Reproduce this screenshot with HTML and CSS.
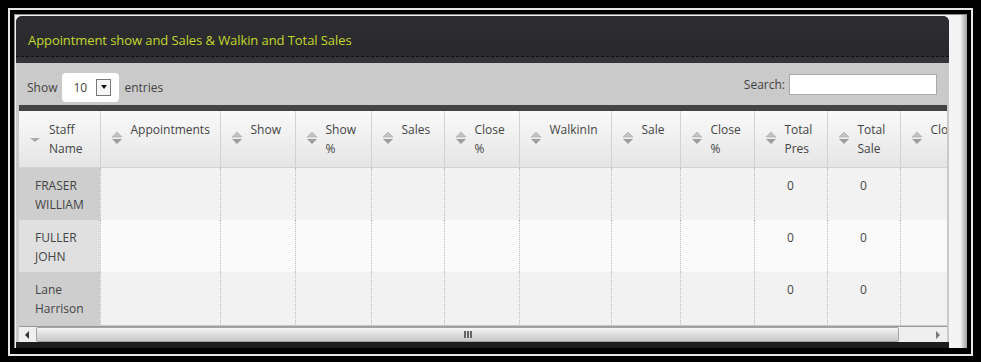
FILE: index.html
```html
<!DOCTYPE html>
<html lang="en">
<head>
    <meta charset="UTF-8">
    <title>Appointment show and Sales</title>
    <link rel="stylesheet" href="styles.css">
</head>
<body>
    <div class="frame">
        <div class="page">
            <div class="widget">
                <div class="widget-head">
                    <h3 class="widget-title">Appointment show and Sales &amp; Walkin and Total Sales</h3>
                </div>
                <div class="widget-body">
                    <div class="toolbar">
                        <div class="length">
                            <span>Show</span>
                            <div class="select-box">
                                <span class="select-value">10</span>
                                <span class="select-btn"><span class="caret"></span></span>
                            </div>
                            <span>entries</span>
                        </div>
                        <label class="search">Search: <input type="text"></label>
                    </div>
                    <div class="table-wrap">
                        <table class="report">
                            <colgroup>
                                <col style="width:81px"><col style="width:120px"><col style="width:75px">
                                <col style="width:76px"><col style="width:73px"><col style="width:75px">
                                <col style="width:92px"><col style="width:69px"><col style="width:74px">
                                <col style="width:73px"><col style="width:73px"><col style="width:80px">
                            </colgroup>
                            <thead>
                                <tr>
                                    <th class="sorted"><span class="sort-ico"><svg width="12" height="14" viewBox="0 0 12 14"><path d="M1 7h10l-5 4z" fill="#a9a9a9"/></svg></span>Staff Name</th>
                                    <th><span class="sort-ico"><svg width="12" height="14" viewBox="0 0 12 14"><path d="M1 6h10l-5-5z" fill="#c3c3c3" stroke="#a8a8a8" stroke-width="0.6"/><path d="M1 8h10l-5 5z" fill="#9d9d9d"/></svg></span>Appointments</th>
                                    <th><span class="sort-ico"><svg width="12" height="14" viewBox="0 0 12 14"><path d="M1 6h10l-5-5z" fill="#c3c3c3" stroke="#a8a8a8" stroke-width="0.6"/><path d="M1 8h10l-5 5z" fill="#9d9d9d"/></svg></span>Show</th>
                                    <th><span class="sort-ico"><svg width="12" height="14" viewBox="0 0 12 14"><path d="M1 6h10l-5-5z" fill="#c3c3c3" stroke="#a8a8a8" stroke-width="0.6"/><path d="M1 8h10l-5 5z" fill="#9d9d9d"/></svg></span>Show %</th>
                                    <th><span class="sort-ico"><svg width="12" height="14" viewBox="0 0 12 14"><path d="M1 6h10l-5-5z" fill="#c3c3c3" stroke="#a8a8a8" stroke-width="0.6"/><path d="M1 8h10l-5 5z" fill="#9d9d9d"/></svg></span>Sales</th>
                                    <th><span class="sort-ico"><svg width="12" height="14" viewBox="0 0 12 14"><path d="M1 6h10l-5-5z" fill="#c3c3c3" stroke="#a8a8a8" stroke-width="0.6"/><path d="M1 8h10l-5 5z" fill="#9d9d9d"/></svg></span>Close %</th>
                                    <th><span class="sort-ico"><svg width="12" height="14" viewBox="0 0 12 14"><path d="M1 6h10l-5-5z" fill="#c3c3c3" stroke="#a8a8a8" stroke-width="0.6"/><path d="M1 8h10l-5 5z" fill="#9d9d9d"/></svg></span>WalkinIn</th>
                                    <th><span class="sort-ico"><svg width="12" height="14" viewBox="0 0 12 14"><path d="M1 6h10l-5-5z" fill="#c3c3c3" stroke="#a8a8a8" stroke-width="0.6"/><path d="M1 8h10l-5 5z" fill="#9d9d9d"/></svg></span>Sale</th>
                                    <th><span class="sort-ico"><svg width="12" height="14" viewBox="0 0 12 14"><path d="M1 6h10l-5-5z" fill="#c3c3c3" stroke="#a8a8a8" stroke-width="0.6"/><path d="M1 8h10l-5 5z" fill="#9d9d9d"/></svg></span>Close %</th>
                                    <th><span class="sort-ico"><svg width="12" height="14" viewBox="0 0 12 14"><path d="M1 6h10l-5-5z" fill="#c3c3c3" stroke="#a8a8a8" stroke-width="0.6"/><path d="M1 8h10l-5 5z" fill="#9d9d9d"/></svg></span>Total Pres</th>
                                    <th><span class="sort-ico"><svg width="12" height="14" viewBox="0 0 12 14"><path d="M1 6h10l-5-5z" fill="#c3c3c3" stroke="#a8a8a8" stroke-width="0.6"/><path d="M1 8h10l-5 5z" fill="#9d9d9d"/></svg></span>Total Sale</th>
                                    <th><span class="sort-ico"><svg width="12" height="14" viewBox="0 0 12 14"><path d="M1 6h10l-5-5z" fill="#c3c3c3" stroke="#a8a8a8" stroke-width="0.6"/><path d="M1 8h10l-5 5z" fill="#9d9d9d"/></svg></span>Close %</th>
                                </tr>
                            </thead>
                            <tbody>
                                <tr class="odd">
                                    <td class="name">FRASER WILLIAM</td>
                                    <td></td><td></td><td></td><td></td><td></td><td></td><td></td><td></td>
                                    <td class="num">0</td><td class="num">0</td><td></td>
                                </tr>
                                <tr class="even">
                                    <td class="name">FULLER JOHN</td>
                                    <td></td><td></td><td></td><td></td><td></td><td></td><td></td><td></td>
                                    <td class="num">0</td><td class="num">0</td><td></td>
                                </tr>
                                <tr class="odd">
                                    <td class="name">Lane Harrison</td>
                                    <td></td><td></td><td></td><td></td><td></td><td></td><td></td><td></td>
                                    <td class="num">0</td><td class="num">0</td><td></td>
                                </tr>
                            </tbody>
                        </table>
                    </div>
                    <div class="hscroll">
                        <span class="arrow-btn left"><svg width="5" height="8" viewBox="0 0 5 8"><path d="M4 0v8L0 4z" fill="#333"/></svg></span>
                        <span class="thumb"><span class="grip"></span></span>
                        <span class="arrow-btn right"><svg width="5" height="8" viewBox="0 0 5 8"><path d="M1 0v8l4-4z" fill="#777"/></svg></span>
                    </div>
                </div>
            </div>
        </div>
    </div>
</body>
</html>
```

FILE: styles.css
```css
body {
    margin: 0;
    padding: 8px;
    background-color: #000;
    font-family: "Open Sans", "DejaVu Sans", sans-serif;
}
.frame {
    border: 2px solid #e6e6e6;
    padding: 4px;
    height: 336px;
    box-sizing: content-box;
}
.page {
    height: 334px;
    padding: 1px 18px 0 1px;
    box-sizing: border-box;
    border-top: 1px solid #8a8a8a;
    border-left: 1px solid #8a8a8a;
    background: linear-gradient(to right, #f4f4f4 calc(100% - 7px), #a0a0a0);
}
.widget {
    height: 100%;
    display: flex;
    flex-direction: column;
}
.widget-head {
    height: 47px;
    box-sizing: border-box;
    padding-bottom: 5px;
    background-color: #343438;
    border-radius: 6px 6px 0 0;
}
.widget-title {
    margin: 0;
    height: 41px;
    box-sizing: border-box;
    padding: 15px 0 0 12px;
    font-size: 13px;
    font-weight: normal;
    line-height: 18px;
    letter-spacing: -0.08px;
    color: #c3d82b;
    background: linear-gradient(#2e2e32, #29292d);
    border-radius: 6px 6px 0 0;
    border-bottom: 1px dashed #111;
}
.widget-body {
    flex: 1;
    background-color: #cacaca;
    padding: 0 2px 0 3px;
    border-bottom: 6px solid #1d1d1d;
    display: flex;
    flex-direction: column;
    min-height: 0;
}
.toolbar {
    height: 42px;
    display: flex;
    justify-content: space-between;
    align-items: center;
    padding: 0 10px 0 8px;
    font-size: 12px;
    color: #444;
    border-bottom: 6px solid #444;
}
.length {
    display: flex;
    align-items: center;
    gap: 5px;
    padding-top: 6px;
}
.select-box {
    width: 57px;
    height: 29px;
    box-sizing: border-box;
    background-color: #fff;
    border-radius: 4px;
    display: flex;
    align-items: center;
    padding: 0 8px 0 11px;
    justify-content: space-between;
}
.select-btn {
    width: 15px;
    height: 17px;
    box-sizing: border-box;
    border: 1px solid #777;
    background-color: #f7f7f7;
    display: flex;
    align-items: center;
    justify-content: center;
}
.caret {
    width: 0;
    height: 0;
    border-left: 3px solid transparent;
    border-right: 3px solid transparent;
    border-top: 4px solid #111;
}
.search {
    display: flex;
    align-items: center;
    gap: 4px;
}
.search input {
    width: 148px;
    height: 21px;
    box-sizing: border-box;
    border: 1px solid #aaa;
    background-color: #fff;
    margin: 0;
    padding: 0;
}
.table-wrap {
    overflow: hidden;
    height: 215px;
}
.report {
    table-layout: fixed;
    width: 881px;
    border-collapse: collapse;
    font-size: 12px;
    color: #444;
}
.report th {
    height: 56px;
    box-sizing: border-box;
    vertical-align: top;
    text-align: left;
    font-weight: normal;
    line-height: 19px;
    padding: 9px 6px 0 30px;
    position: relative;
    background: linear-gradient(#f9f9f9, #e5e5e5);
    border-left: 1px solid #d2d2d2;
    border-bottom: 1px solid #d2d2d2;
}
.report th:first-child {
    border-left: none;
}
.sort-ico {
    position: absolute;
    left: 10px;
    top: 20px;
    display: block;
    line-height: 0;
}
.report td {
    height: 53px;
    box-sizing: border-box;
    vertical-align: top;
    padding: 8px 6px 0 16px;
    line-height: 19px;
    border-left: 1px dotted #bbb;
}
.report tbody tr:nth-child(2) td {
    height: 52px;
}
.report td:first-child {
    border-left: none;
}
.report td.num {
    text-align: center;
    padding-left: 6px;
}
.report tr.odd td {
    background-color: #f2f2f2;
}
.report tr.even td {
    background-color: #fafafa;
}
.report tr.odd td.name {
    background-color: #cecece;
}
.report tr.even td.name {
    background-color: #e0e0e0;
}
.hscroll {
    height: 16px;
    box-sizing: border-box;
    border-top: 1px solid #9a9a9a;
    background-color: #efefef;
    display: flex;
    align-items: stretch;
}
.arrow-btn {
    width: 17px;
    display: flex;
    align-items: center;
    justify-content: center;
}
.arrow-btn.right {
    margin-left: auto;
    width: 20px;
}
.thumb {
    width: 863px;
    box-sizing: border-box;
    border: 1px solid #a4a4a4;
    border-radius: 2px;
    background: linear-gradient(#f6f6f6, #dcdcdc 50%, #c9c9c9);
    display: flex;
    align-items: center;
    justify-content: center;
}
.grip {
    width: 8px;
    height: 7px;
    background: repeating-linear-gradient(to right, #666 0 2px, #ddd 2px 3px);
}
```
